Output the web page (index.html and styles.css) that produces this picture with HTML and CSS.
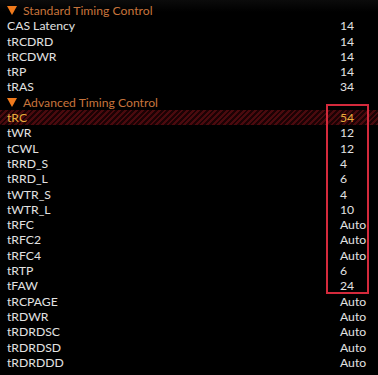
FILE: index.html
```html
<!DOCTYPE html>
<html lang="en">
<head>
    <meta charset="UTF-8">
    <meta name="viewport" content="width=device-width, initial-scale=1.0">
    <title>Timing Configuration</title>
    <link rel="stylesheet" href="styles.css">
</head>
<body>
    <div class="panel">
        <div class="group"><span class="tri"></span>Standard Timing Control</div>
        <div class="row"><span>CAS Latency</span><span class="val">14</span></div>
        <div class="row"><span>tRCDRD</span><span class="val">14</span></div>
        <div class="row"><span>tRCDWR</span><span class="val">14</span></div>
        <div class="row"><span>tRP</span><span class="val">14</span></div>
        <div class="row"><span>tRAS</span><span class="val">34</span></div>

        <div class="group"><span class="tri"></span>Advanced Timing Control</div>
        <div class="row active"><span>tRC</span><span class="val">54</span></div>
        <div class="row"><span>tWR</span><span class="val">12</span></div>
        <div class="row"><span>tCWL</span><span class="val">12</span></div>
        <div class="row"><span>tRRD_S</span><span class="val">4</span></div>
        <div class="row"><span>tRRD_L</span><span class="val">6</span></div>
        <div class="row"><span>tWTR_S</span><span class="val">4</span></div>
        <div class="row"><span>tWTR_L</span><span class="val">10</span></div>
        <div class="row"><span>tRFC</span><span class="val">Auto</span></div>
        <div class="row"><span>tRFC2</span><span class="val">Auto</span></div>
        <div class="row"><span>tRFC4</span><span class="val">Auto</span></div>
        <div class="row"><span>tRTP</span><span class="val">6</span></div>
        <div class="row"><span>tFAW</span><span class="val">24</span></div>
        <div class="row"><span>tRCPAGE</span><span class="val">Auto</span></div>
        <div class="row"><span>tRDWR</span><span class="val">Auto</span></div>
        <div class="row"><span>tRDRDSC</span><span class="val">Auto</span></div>
        <div class="row"><span>tRDRDSD</span><span class="val">Auto</span></div>
        <div class="row"><span>tRDRDDD</span><span class="val">Auto</span></div>

        <div class="mark"></div>
    </div>
</body>
</html>
```

FILE: styles.css
```css
body
{
    margin: 0;
    padding: 0;
    background: #000;
    font-family: 'Lato', 'Open Sans', sans-serif;
    font-size: 12.2px;
    color: #e2e2e2;
}

.panel
{
    position: relative;
    width: 378px;
    height: 375px;
    padding-top: 3px;
    box-sizing: border-box;
    background: linear-gradient(#0b0b0b, #000 12px);
}

.group
{
    height: 15.3px;
    line-height: 15.3px;
    padding-left: 7px;
    display: flex;
    align-items: center;
    color: #c7743c;
}

.tri
{
    width: 0;
    height: 0;
    border-left: 5px solid transparent;
    border-right: 5px solid transparent;
    border-top: 9px solid #f07a1c;
    margin-right: 6px;
}

.row
{
    height: 15.3px;
    line-height: 15.3px;
    padding-left: 7px;
    display: flex;
    justify-content: space-between;
}

.val
{
    width: 38px;
}

.active
{
    color: #e8ad3c;
    background: repeating-linear-gradient(135deg, #4a0a0e 0 2px, #1c0204 2px 4px);
}

.mark
{
    position: absolute;
    left: 326px;
    top: 104px;
    width: 39px;
    height: 186px;
    border: 2px solid #d42a3c;
}
```
